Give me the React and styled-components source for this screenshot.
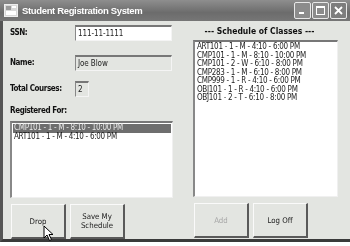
import styled, { createGlobalStyle } from 'styled-components';

const Global = createGlobalStyle`
    html, body { margin: 0; padding: 0; background: #fff; }
    body { width: 350px; height: 246px; overflow: hidden; font-family: "DejaVu Sans Condensed", "DejaVu Sans", sans-serif; font-stretch: condensed; }
`

const Window = styled.div`
    width: 350px;
    height: 242px;
    background: #e3e5e1;
    border-left: 3px solid #555;
    border-bottom: 3px solid #3a3a3a;
    box-sizing: border-box;
    display: flex;
    flex-direction: column;
`
const TitleBar = styled.div`
    height: 22px;
    margin-left: -3px;
    background: linear-gradient(#8e8e8e, #6c6c6c 60%, #767676);
    display: flex;
    align-items: center;
    padding: 0 3px 0 4px;
    gap: 4px;
    filter: grayscale(1);
`
const Title = styled.span`
    color: #fff;
    font-family: "Liberation Sans", Arial, sans-serif;
    font-weight: bold;
    font-size: 9.5px;
    letter-spacing: -0.35px;
    flex: 1;
`
const WinBtns = styled.div`
    display: flex;
    gap: 1px;
`
const WinBtn = styled.div`
    width: 15px;
    height: 15px;
    border: 1px solid #e8e8e8;
    border-radius: 2px;
    background: ${p => p.$close ? '#7d7d7d' : '#8c8c8c'};
    display: flex;
    align-items: center;
    justify-content: center;
`
const Body = styled.div`
    flex: 1;
    display: flex;
    padding: 3px 0 0 7px;
`
const LeftCol = styled.div`
    width: 170px;
    display: flex;
    flex-direction: column;
    filter: grayscale(1);
`
const Row = styled.div`
    display: flex;
    align-items: center;
    height: 17px;
    margin-bottom: ${p => p.$mb || 0}px;
`
const Label = styled.span`
    width: 65px;
    font-size: 8px;
    font-weight: bold;
    letter-spacing: -0.4px;
    color: #111;
`
const Field = styled.div`
    width: ${p => p.$w || 97}px;
    height: ${p => p.$h || 16}px;
    box-sizing: border-box;
    font-size: 8px;
    letter-spacing: -0.1px;
    padding-left: 2px;
    display: flex;
    align-items: center;
    color: #222;
    background: ${p => p.$disabled ? 'transparent' : '#fff'};
    border-top: 2px solid #777;
    border-left: 1px solid #888;
    border-right: 1px solid #f4f4f4;
    border-bottom: 1px solid #f4f4f4;
`
const ListBox = styled.div`
    width: ${p => p.$w}px;
    height: ${p => p.$h}px;
    box-sizing: border-box;
    background: #fff;
    border-top: 2px solid #777;
    border-left: 2px solid #888;
    border-right: 1px solid #f0f0f0;
    border-bottom: 1px solid #f0f0f0;
    padding: 1px;
    font-size: 8px;
    line-height: 8.5px;
    color: #1c1c1c;
`
const Item = styled.div`
    padding-left: 1px;
    white-space: nowrap;
    letter-spacing: -0.3px;
    background: ${p => p.$sel ? '#6e6e6e' : 'transparent'};
    color: ${p => p.$sel ? '#e8e8e8' : '#1c1c1c'};
`
const SectionLabel = styled.div`
    font-size: 8px;
    font-weight: bold;
    letter-spacing: -0.4px;
    color: #111;
    margin-bottom: 6px;
`
const Buttons = styled.div`
    display: flex;
    gap: 4px;
    margin-top: 6px;
    padding-left: 1px;
`
const Button = styled.div`
    width: 55px;
    height: 35px;
    box-sizing: border-box;
    background: transparent;
    border-top: 1px solid #fafafa;
    border-left: 1px solid #fafafa;
    border-right: 2px solid #5a5a5a;
    border-bottom: 2px solid #5a5a5a;
    display: flex;
    align-items: center;
    justify-content: center;
    text-align: center;
    font-size: 7.8px;
    line-height: 9px;
    color: ${p => p.$disabled ? '#a8a8a8' : '#1a1a1a'};
    position: relative;
`
const RightCol = styled.div`
    margin-left: 13px;
    width: 148px;
    display: flex;
    flex-direction: column;
    align-items: flex-start;
    filter: grayscale(1);
`
const Heading = styled.div`
    width: 133px;
    text-align: center;
    font-size: 8.5px;
    font-weight: bold;
    color: #111;
    margin: 2px 0 4px;
`
const Cursor = styled.svg`
    position: absolute;
    left: 31px;
    top: 20px;
`

const registered = [
    'CMP101 - 1 - M - 8:10 - 10:00 PM',
    'ART101 - 1 - M - 4:10 - 6:00 PM',
];
const schedule = [
    'ART101 - 1 - M - 4:10 - 6:00 PM',
    'CMP101 - 1 - M - 8:10 - 10:00 PM',
    'CMP101 - 2 - W - 6:10 - 8:00 PM',
    'CMP283 - 1 - M - 6:10 - 8:00 PM',
    'CMP999 - 1 - R - 4:10 - 6:00 PM',
    'OBJ101 - 1 - R - 4:10 - 6:00 PM',
    'OBJ101 - 2 - T - 6:10 - 8:00 PM',
];

const App = () => {
    return (
        <>
            <Global />
            <Window>
                <TitleBar>
                    <svg width="14" height="13" viewBox="0 0 14 13">
                        <rect x="0.5" y="0.5" width="13" height="12" fill="#d8d8d8" stroke="#eee" />
                        <rect x="2" y="2" width="5" height="4" fill="#9a9a9a" />
                        <rect x="8" y="2" width="4" height="2" fill="#fff" />
                        <rect x="2" y="7" width="10" height="4" fill="#fff" />
                    </svg>
                    <Title>Student Registration System</Title>
                    <WinBtns>
                        <WinBtn>
                            <svg width="11" height="11" viewBox="0 0 11 11"><rect x="2" y="7" width="5" height="2" fill="#fff" /></svg>
                        </WinBtn>
                        <WinBtn>
                            <svg width="11" height="11" viewBox="0 0 11 11"><rect x="1.5" y="1.5" width="8" height="8" fill="none" stroke="#fff" /><rect x="1" y="1" width="9" height="2" fill="#fff" /></svg>
                        </WinBtn>
                        <WinBtn $close>
                            <svg width="11" height="11" viewBox="0 0 11 11"><path d="M2 2 L9 9 M9 2 L2 9" stroke="#fff" strokeWidth="1.8" /></svg>
                        </WinBtn>
                    </WinBtns>
                </TitleBar>
                <Body>
                    <LeftCol>
                        <Row $mb={13}>
                            <Label>SSN:</Label>
                            <Field>111-11-1111</Field>
                        </Row>
                        <Row $mb={9}>
                            <Label>Name:</Label>
                            <Field $disabled>Joe Blow</Field>
                        </Row>
                        <Row $mb={9}>
                            <Label>Total Courses:</Label>
                            <Field $w={14} $disabled>2</Field>
                        </Row>
                        <SectionLabel>Registered For:</SectionLabel>
                        <ListBox $w={163} $h={77}>
                            {registered.map((r, i) => (
                                <Item key={r} $sel={i === 0}>{r}</Item>
                            ))}
                        </ListBox>
                        <Buttons>
                            <Button>
                                Drop
                                <Cursor width="11" height="17" viewBox="0 0 11 17">
                                    <path d="M1 1 L1 13 L4 10 L6.5 15.5 L8.5 14.5 L6 9.5 L10 9.5 Z" fill="#fff" stroke="#000" strokeWidth="1" strokeLinejoin="round" />
                                </Cursor>
                            </Button>
                            <Button>Save My<br />Schedule</Button>
                        </Buttons>
                    </LeftCol>
                    <RightCol>
                        <Heading>--- Schedule of Classes ---</Heading>
                        <ListBox $w={145} $h={157}>
                            {schedule.map(s => (
                                <Item key={s}>{s}</Item>
                            ))}
                        </ListBox>
                        <Buttons>
                            <Button $disabled>Add</Button>
                            <Button>Log Off</Button>
                        </Buttons>
                    </RightCol>
                </Body>
            </Window>
        </>
    )
}

export default App;
